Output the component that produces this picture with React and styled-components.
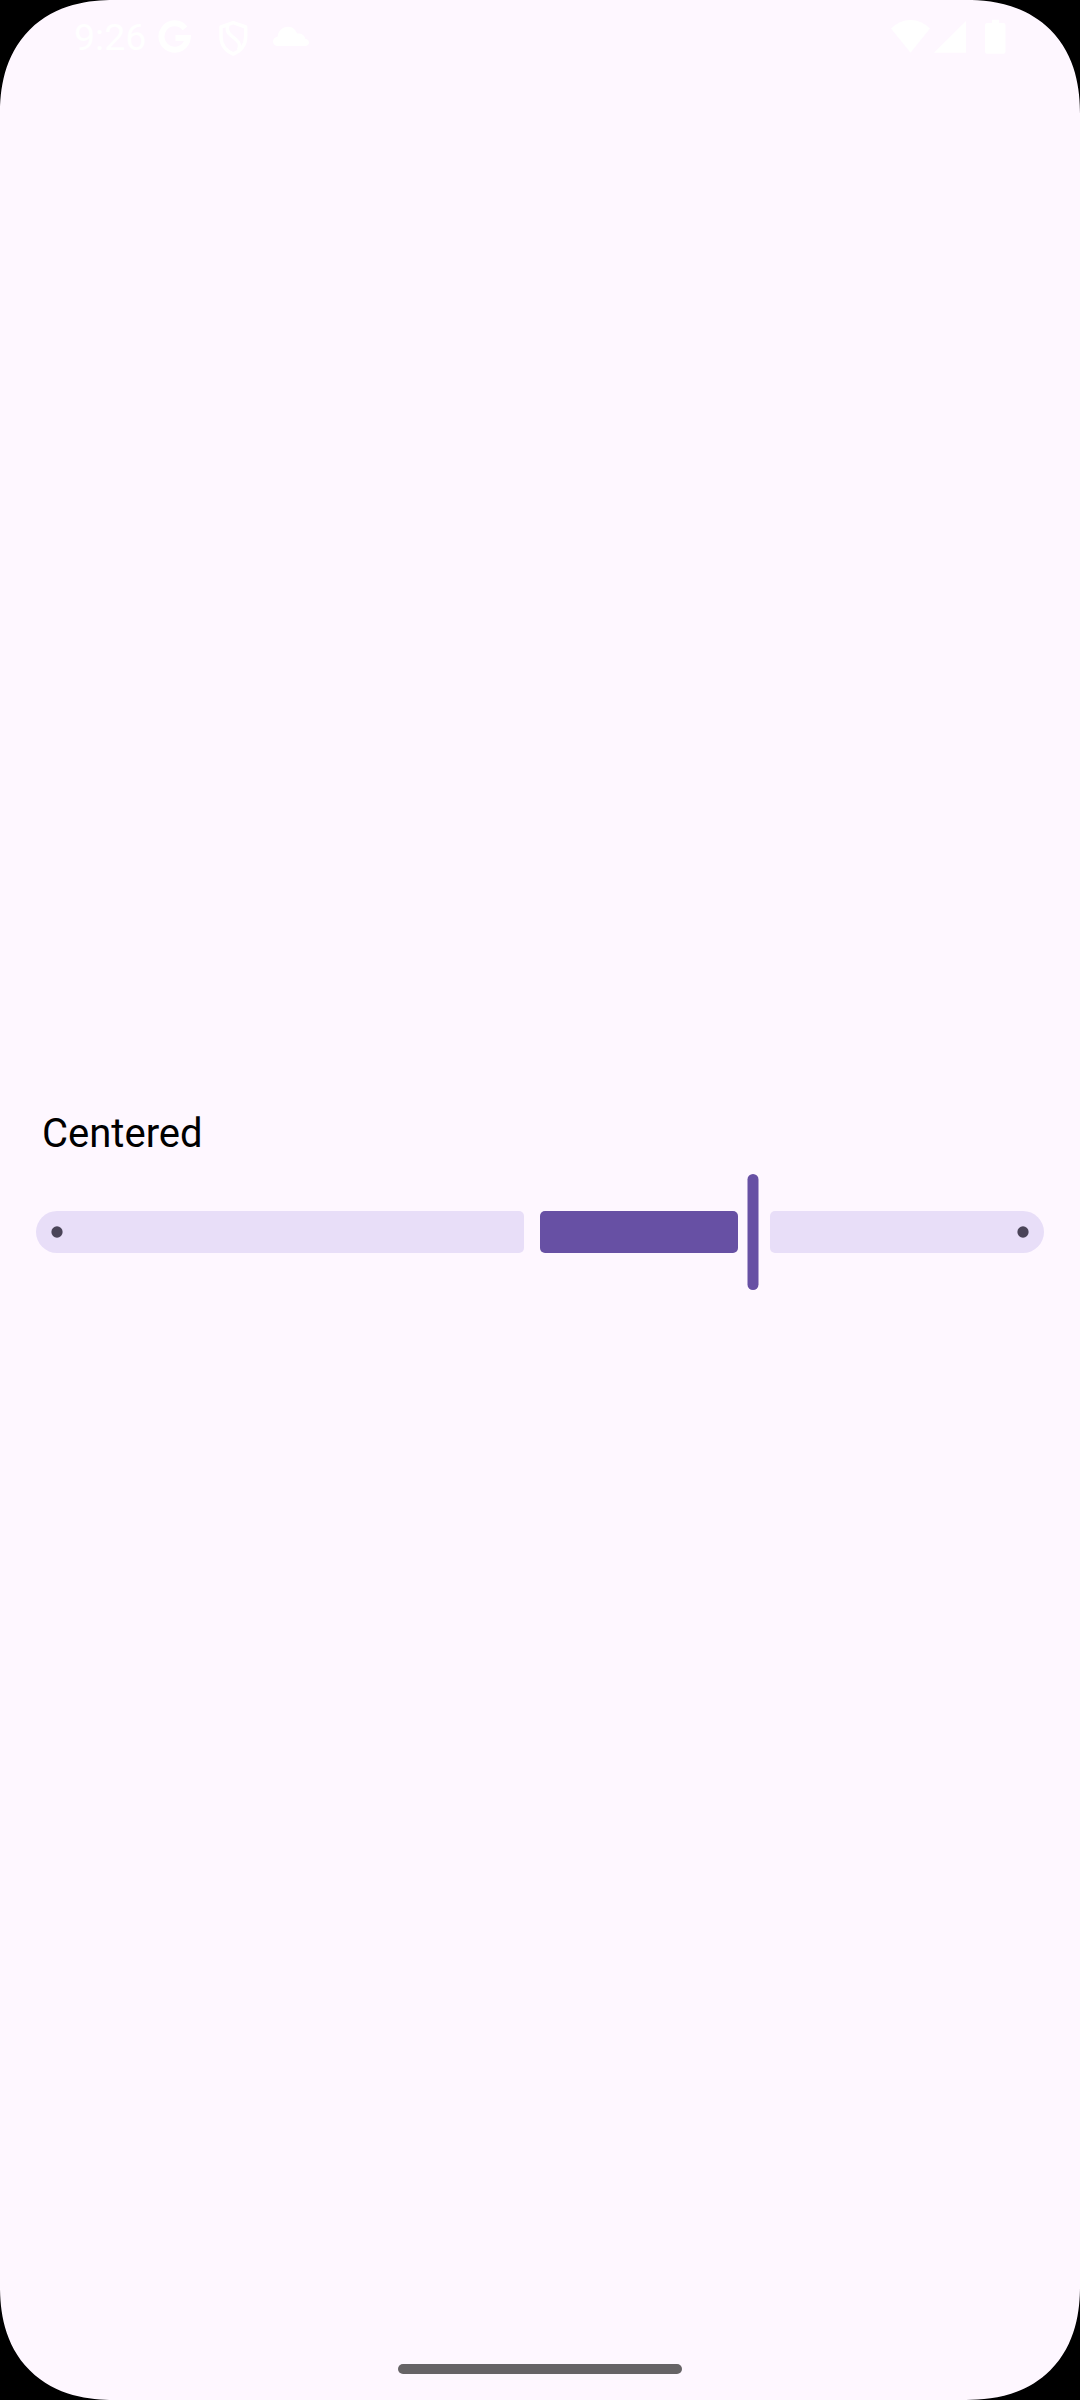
import React from 'react';
import styled, { createGlobalStyle } from 'styled-components';

const GlobalStyle = createGlobalStyle`
  body { margin: 0; background: #000; }
  *, *::before, *::after { box-sizing: border-box; }
`;

const Screen = styled.div`
  display: flex;
  flex-direction: column;
  width: 1080px;
  height: 2400px;
  overflow: hidden;
  background: #fef7ff;
  border-radius: 114px;
  corner-shape: superellipse(1.2);
  font-family: Roboto, sans-serif;
`;

const StatusBar = styled.header`
  display: flex;
  flex: none;
  justify-content: space-between;
  height: 74px;
  padding: 0 74px;
  color: #fff;
`;

const StatusGroup = styled.div`
  display: flex;
  align-items: center;
`;

const Clock = styled.span`
  width: 84px;
  font-size: 37.5px;
  line-height: 75px;
`;

const Icon = styled.svg`
  display: block;
  flex: none;
  width: ${(p) => p.$w}px;
  height: 74px;
  margin-left: ${(p) => p.$gap || 0}px;
  fill: currentColor;
`;

const Content = styled.main`
  display: flex;
  flex: 1;
  flex-direction: column;
  justify-content: center;
  padding: 0 36px 14px;
`;

const Label = styled.label`
  padding: 0 6px;
  color: #000;
  font-size: 40px;
  line-height: 63px;
`;

const Slider = styled.div`
  display: flex;
  align-items: center;
  height: 126px;
  margin-top: 4px;
`;

const Track = styled.div`
  display: flex;
  align-items: center;
  justify-content: ${(p) => (p.$end ? 'flex-end' : 'flex-start')};
  width: ${(p) => p.$width}px;
  height: 42px;
  padding: 0 15px;
  background: ${(p) => (p.$active ? '#6750a4' : '#e8def8')};
  border-radius: ${(p) => p.$radius || '5px'};
  margin-right: ${(p) => p.$gap || 0}px;
`;

const Stop = styled.span`
  width: 12px;
  height: 12px;
  border-radius: 50%;
  background: #4a4458;
  transform: scale(0.94);
`;

const Thumb = styled.div`
  width: 11px;
  height: 116px;
  margin-right: 12px;
  border-radius: 6px;
  background: #6750a4;
  transform: translateX(0.5px);
`;

const NavBar = styled.footer`
  display: flex;
  flex: none;
  justify-content: center;
  height: 63px;
  padding-top: 27px;
`;

const Handle = styled.div`
  width: 284px;
  height: 10px;
  border-radius: 5px;
  background: #666366;
`;

export default function App() {
  return (
    <>
      <GlobalStyle />
      <Screen>
        <StatusBar>
          <StatusGroup>
            <Clock>9:26</Clock>
            <Icon $w={34} viewBox="0 0 34 74">
              <path
                d="M27 28.3A13.2 13.2 0 1 0 29.8 38H17.5"
                fill="none"
                stroke="currentColor"
                strokeWidth="6"
              />
            </Icon>
            <Icon $w={32} $gap={25} viewBox="0 0 32 74">
              <path
                d="M16.3 22.7L28.7 27V37C28.7 45 23.5 51.5 16.3 54C9.1 51.5 4 45 4 37V27ZM11 25C9.5 29 10 32 13.500 35L19.500 40C23 43 23.500 46 21.500 50"
                fill="none"
                stroke="currentColor"
                strokeWidth="3.5"
                strokeLinejoin="round"
              />
            </Icon>
            <Icon $w={36} $gap={24} viewBox="0 0 36 74">
              <path d="M5 46C2 46 0 44.1 0 41.5C0 39 2 37 4.7 36.5C5 31 9.5 26.7 15 26.7C19.5 26.7 22.8 29.5 24 33.6C28 33 31.7 35 32.3 39C34.6 39.2 36 40.6 36 42.5C36 44.7 34.4 46 32 46Z" />
            </Icon>
          </StatusGroup>
          <StatusGroup>
            <Icon $w={39} viewBox="0 0 39 74">
              <path d="M0 28.5Q8.5 20 19.5 20T39 28.5L19.5 52.7Z" />
            </Icon>
            <Icon $w={32} $gap={4} viewBox="0 0 32 74">
              <path d="M32 21V52.7H0Z" />
            </Icon>
            <Icon $w={21} $gap={19} viewBox="0 0 21 74">
              <path d="M7 19.7H14V23H18.5Q20.5 23 20.5 25V51.5Q20.5 53.7 18.5 53.7H2Q0 53.7 0 51.5V25Q0 23 2 23H7Z" />
            </Icon>
          </StatusGroup>
        </StatusBar>
        <Content>
          <Label>Centered</Label>
          <Slider>
            <Track $width={488} $gap={16} $radius="21px 5px 5px 21px">
              <Stop />
            </Track>
            <Track $width={198} $gap={9} $active />
            <Thumb />
            <Track $width={274} $end $radius="5px 21px 21px 5px">
              <Stop />
            </Track>
          </Slider>
        </Content>
        <NavBar>
          <Handle />
        </NavBar>
      </Screen>
    </>
  );
}
